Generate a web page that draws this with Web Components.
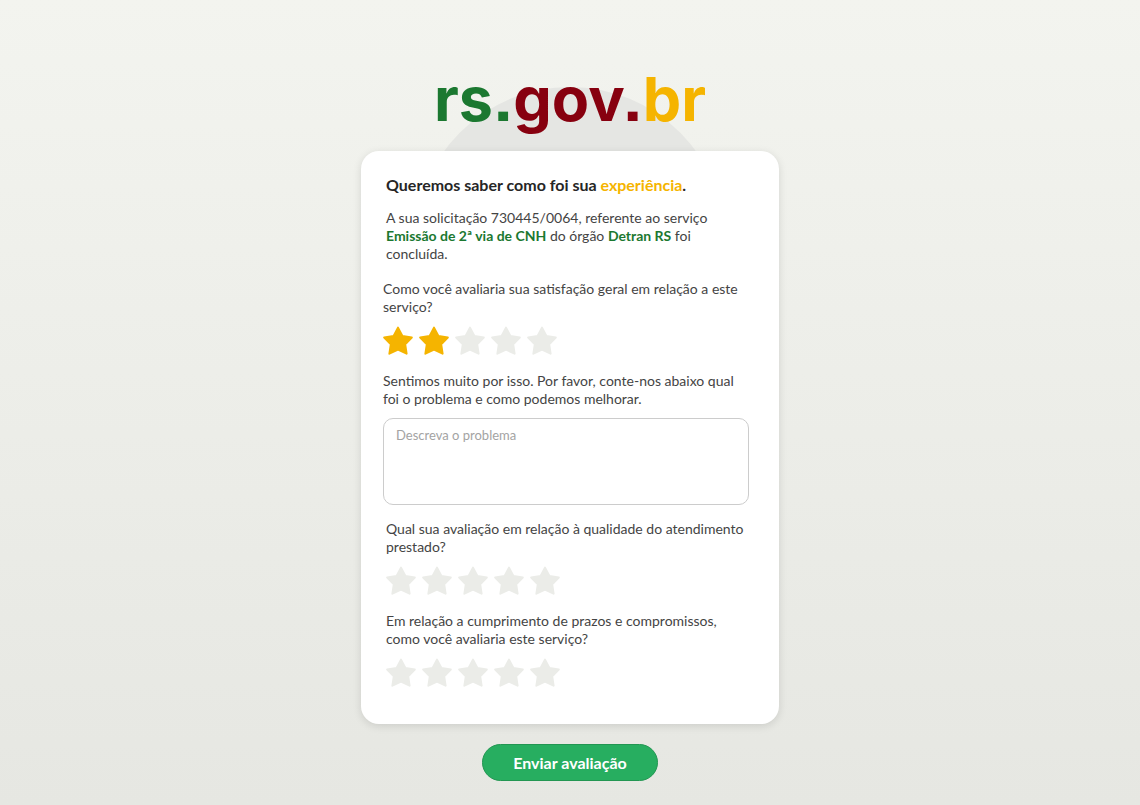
<!DOCTYPE html>
<html lang="pt-BR">
<head>
<meta charset="UTF-8">
<meta name="viewport" content="width=device-width, initial-scale=1">
<title>Avaliação de serviço - rs.gov.br</title>
<style>
    body {
        margin: 0;
        min-height: 100vh;
        background: linear-gradient(#f3f4ef, #e6e7e2);
        font-family: Lato, "Open Sans", sans-serif;
        color: #444;
    }
</style>
</head>
<body>
<survey-page></survey-page>

<script>
class SiteLogo extends HTMLElement {
    connectedCallback() {
        this.attachShadow({ mode: 'open' });
        this.shadowRoot.innerHTML = `
            <style>
                :host {
                    display: block;
                    position: relative;
                    text-align: center;
                    font: 700 61px/72px Inter, sans-serif;
                    /* square punctuation */
                    font-feature-settings: "ss07";
                }

                /* half-hidden disc behind the card */
                .disc {
                    position: absolute;
                    z-index: -1;
                    top: 24px;
                    left: 50%;
                    width: 312px;
                    height: 312px;
                    margin-left: -156px;
                    border-radius: 50%;
                    background: #e5e6e3;
                }

                .state { color: #1b7830; }
                .gov { color: #87000f; }
                .country { color: #f5b400; }
            </style>

            <div class="disc"></div>
            <span class="state">rs.</span><span class="gov">gov.</span><span class="country">br</span>
        `;
    }
}

class StarRating extends HTMLElement {
    connectedCallback() {
        this.attachShadow({ mode: 'open' });
        this.render();
        this.setupEventListeners();
    }

    render() {
        const value = Number(this.getAttribute('value')) || 0;
        const stars = [1, 2, 3, 4, 5].map(n => `
            <label class="${n <= value ? 'on' : ''}">
                <input type="radio" name="rating" value="${n}" aria-label="${n} de 5" ${n === value ? 'checked' : ''}>
                <svg width="30" height="30" viewBox="0 0 30 30" aria-hidden="true">
                    <path d="M15 1.6L19.4 9.9L28.8 11.5L22.2 18.3L23.6 27.7L15 23.6L6.4 27.7L7.8 18.3L1.2 11.5L10.6 9.9Z"/>
                </svg>
            </label>
        `).join('');

        this.shadowRoot.innerHTML = `
            <style>
                :host {
                    display: block;
                }

                fieldset {
                    margin: 0;
                    padding: 0;
                    border: none;
                    min-width: 0;
                }

                legend {
                    padding: 0;
                    margin-bottom: 10px;
                }

                .stars {
                    display: flex;
                    gap: 6px;
                }

                label {
                    display: block;
                    position: relative;
                    height: 30px;
                    cursor: pointer;
                    color: #ebece8;
                }

                label.on {
                    color: #f5b400;
                }

                input {
                    position: absolute;
                    inset: 0;
                    width: 30px;
                    height: 30px;
                    margin: 0;
                    opacity: 0;
                    cursor: pointer;
                }

                input:focus-visible + svg {
                    outline: 2px solid #1b7830;
                }

                svg {
                    display: block;
                    fill: currentColor;
                    stroke: currentColor;
                    stroke-width: 2;
                    stroke-linejoin: round;
                }
            </style>

            <fieldset>
                <legend><slot></slot></legend>
                <div class="stars">${stars}</div>
            </fieldset>
        `;
    }

    setupEventListeners() {
        this.shadowRoot.addEventListener('change', (e) => {
            const value = Number(e.target.value);
            this.shadowRoot.querySelectorAll('label').forEach((label, i) => {
                label.classList.toggle('on', i < value);
            });
        });
    }
}

class ProblemField extends HTMLElement {
    connectedCallback() {
        this.attachShadow({ mode: 'open' });
        this.shadowRoot.innerHTML = `
            <style>
                :host {
                    display: block;
                }

                label {
                    display: block;
                    margin-bottom: 10px;
                }

                textarea {
                    display: block;
                    box-sizing: border-box;
                    width: 100%;
                    height: 87px;
                    padding: 7px 12px;
                    border: 1px solid #ccc;
                    border-radius: 10px;
                    background: #fff;
                    color: inherit;
                    font: 400 13px/18px Lato, sans-serif;
                    resize: none;
                }

                textarea::placeholder {
                    color: #a3a3a3;
                }
            </style>

            <label for="problem"><slot></slot></label>
            <textarea id="problem" placeholder="${this.getAttribute('placeholder') || ''}"></textarea>
        `;
    }
}

class SurveyCard extends HTMLElement {
    connectedCallback() {
        this.attachShadow({ mode: 'open' });
        this.shadowRoot.innerHTML = `
            <style>
                :host {
                    display: block;
                    box-sizing: border-box;
                    width: 100%;
                    max-width: 418px;
                    padding: 24px 30px 36px 22px;
                    border-radius: 18px;
                    background: #fff;
                    box-shadow: 0 2px 8px rgba(0, 0, 0, 0.12);
                }
            </style>

            <slot></slot>
        `;
    }
}

class SubmitButton extends HTMLElement {
    connectedCallback() {
        this.attachShadow({ mode: 'open' });
        this.shadowRoot.innerHTML = `
            <style>
                :host {
                    display: block;
                }

                button {
                    display: block;
                    min-width: 176px;
                    height: 37px;
                    padding: 0 24px;
                    border: 1px solid #229652;
                    border-radius: 19px;
                    background: #27ae60;
                    color: #fff;
                    font: 700 16px/20px Lato, sans-serif;
                    cursor: pointer;
                }

                button:hover {
                    background: #229652;
                }
            </style>

            <button type="button"><slot></slot></button>
        `;
    }
}

class SurveyPage extends HTMLElement {
    connectedCallback() {
        this.attachShadow({ mode: 'open' });
        this.shadowRoot.innerHTML = `
            <style>
                :host {
                    display: flex;
                    flex-direction: column;
                    align-items: center;
                    position: relative;
                    z-index: 0;
                    padding: 63px 16px 24px;
                    font-size: 14px;
                    font-weight: 400;
                    line-height: 18px;
                }

                site-logo {
                    margin-bottom: 16px;
                }

                .intro {
                    padding-left: 3px;
                }

                h1 {
                    margin: 0 0 14px;
                    font-size: 16px;
                    line-height: 20px;
                    color: #262626;
                }

                h1 em {
                    font-style: normal;
                    color: #f5b400;
                }

                p {
                    margin: 0 0 17px;
                }

                strong {
                    color: #1b7830;
                }

                problem-field {
                    margin: 16px 0 15px;
                }

                .details {
                    display: grid;
                    gap: 16px;
                    padding-left: 3px;
                }

                submit-button {
                    margin-top: 20px;
                }
            </style>

            <site-logo></site-logo>
            <survey-card>
                <div class="intro">
                    <h1>Queremos saber como foi sua <em>experiência</em>.</h1>
                    <p>A sua solicitação 730445/0064, referente ao serviço <strong>Emissão de 2ª via de CNH</strong> do órgão <strong>Detran RS</strong> foi concluída.</p>
                </div>
                <star-rating value="2">Como você avaliaria sua satisfação geral em relação a este serviço?</star-rating>
                <problem-field placeholder="Descreva o problema">Sentimos muito por isso. Por favor, conte-nos abaixo qual foi o problema e como podemos melhorar.</problem-field>
                <div class="details">
                    <star-rating>Qual sua avaliação em relação à qualidade do atendimento prestado?</star-rating>
                    <star-rating>Em relação a cumprimento de prazos e compromissos, como você avaliaria este serviço?</star-rating>
                </div>
            </survey-card>
            <submit-button>Enviar avaliação</submit-button>
        `;
    }
}

customElements.define('site-logo', SiteLogo);
customElements.define('star-rating', StarRating);
customElements.define('problem-field', ProblemField);
customElements.define('survey-card', SurveyCard);
customElements.define('submit-button', SubmitButton);
customElements.define('survey-page', SurveyPage);
</script>
</body>
</html>
